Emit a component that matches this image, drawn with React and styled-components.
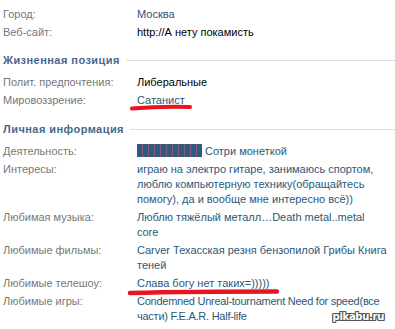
import React from 'react';
import styled, { createGlobalStyle } from 'styled-components';

const GlobalStyle = createGlobalStyle`
  html, body {
    margin: 0;
    padding: 0;
    background: #fff;
  }
  body {
    font-family: Tahoma, "Liberation Sans", "DejaVu Sans", sans-serif;
    font-size: 11px;
    color: #000;
  }
`;

const Page = styled.div`
  position: relative;
  width: 395px;
  height: 329px;
  overflow: hidden;
  padding: 6.5px 0 0 3px;
  box-sizing: border-box;
`;

const Row = styled.div`
  display: grid;
  grid-template-columns: 134px 256px;
  line-height: 15px;
  padding-bottom: 3px;
`;

const Label = styled.div`
  color: #777;
`;

const Value = styled.div`
  color: ${(p) => (p.$link ? '#2b587a' : '#000')};
`;

const Line = styled.div`
  white-space: nowrap;
  letter-spacing: ${(p) => p.$tight || 0}px;
`;

const Header = styled.div`
  display: flex;
  align-items: center;
  gap: 6px;
  margin: ${(p) => (p.$first ? '10px' : '11px')} 0 7px;
  line-height: 15px;
  font-weight: bold;
  letter-spacing: 0.45px;
  color: #45688e;

  &::after {
    content: '';
    flex: 1;
    height: 1px;
    background: #dae1e8;
  }
`;

const Redacted = styled.span`
  display: inline-block;
  width: 65px;
  height: 13px;
  margin-right: 3px;
  vertical-align: -2px;
  background-color: #2f5a80;
  background-image: repeating-linear-gradient(
    90deg,
    transparent 0,
    transparent 5px,
    #8a5a7a 5px,
    #8a5a7a 6px
  );
`;

const Marks = styled.svg`
  position: absolute;
  left: 0;
  top: 0;
  pointer-events: none;
`;

const Watermark = styled.div`
  position: absolute;
  right: 11px;
  bottom: 7px;
  font-family: "DejaVu Sans", sans-serif;
  font-weight: bold;
  font-size: 10px;
  letter-spacing: -0.3px;
  color: #fff;
  text-shadow:
    -1px 0 #555, 1px 0 #555, 0 -1px #555, 0 1px #555,
    -1px -1px #555, 1px 1px #555, -1px 1px #555, 1px -1px #555;
`;

// value lines are given as in the profile, one entry per visual line
const Field = ({ label, link, lines, tight }) => (
  <Row>
    <Label>{label}</Label>
    <Value $link={link}>
      {lines.map((l, i) => (
        <Line key={i} $tight={tight}>{l}</Line>
      ))}
    </Value>
  </Row>
);

export default function App() {
  return (
    <Page>
      <GlobalStyle />
      <Field label="Город:" link lines={['Москва']} />
      <Field label="Веб-сайт:" lines={['http://А нету покамисть']} />

      <Header $first>Жизненная позиция</Header>
      <Field label="Полит. предпочтения:" lines={['Либеральные']} />
      <Field label="Мировоззрение:" link lines={['Сатанист']} />

      <Header>Личная информация</Header>
      <Field label="Деятельность:" link lines={[<><Redacted />Сотри монеткой</>]} />
      <Field
        label="Интересы:"
        link
        lines={[
          'играю на электро гитаре, занимаюсь спортом,',
          'люблю компьютерную технику(обращайтесь',
          'помогу), да и вообще мне интересно всё))',
        ]}
      />
      <Field
        label="Любимая музыка:"
        link
        lines={['Люблю тяжёлый металл…Death metal..metal', 'core']}
      />
      <Field
        label="Любимые фильмы:"
        link
        lines={['Carver Техасская резня бензопилой Грибы Книга', 'теней']}
      />
      <Field label="Любимые телешоу:" link lines={['Слава богу нет таких=)))))']} />
      <Field
        label="Любимые игры:"
        link
        tight={-0.25}
        lines={['Condemned Unreal-tournament Need for speed(все', 'части) F.E.A.R. Half-life']}
      />

      <Marks width="395" height="329" viewBox="0 0 395 329">
        <path d="M132 108.5 C150 107, 172 106.5, 190 107" stroke="#e8141f" strokeWidth="4" strokeLinecap="round" fill="none" />
        <path d="M130 293 C170 292, 230 291.5, 277 291.5" stroke="#e8141f" strokeWidth="4.5" strokeLinecap="round" fill="none" />
      </Marks>
      <Watermark>pikabu.ru</Watermark>
    </Page>
  );
}
